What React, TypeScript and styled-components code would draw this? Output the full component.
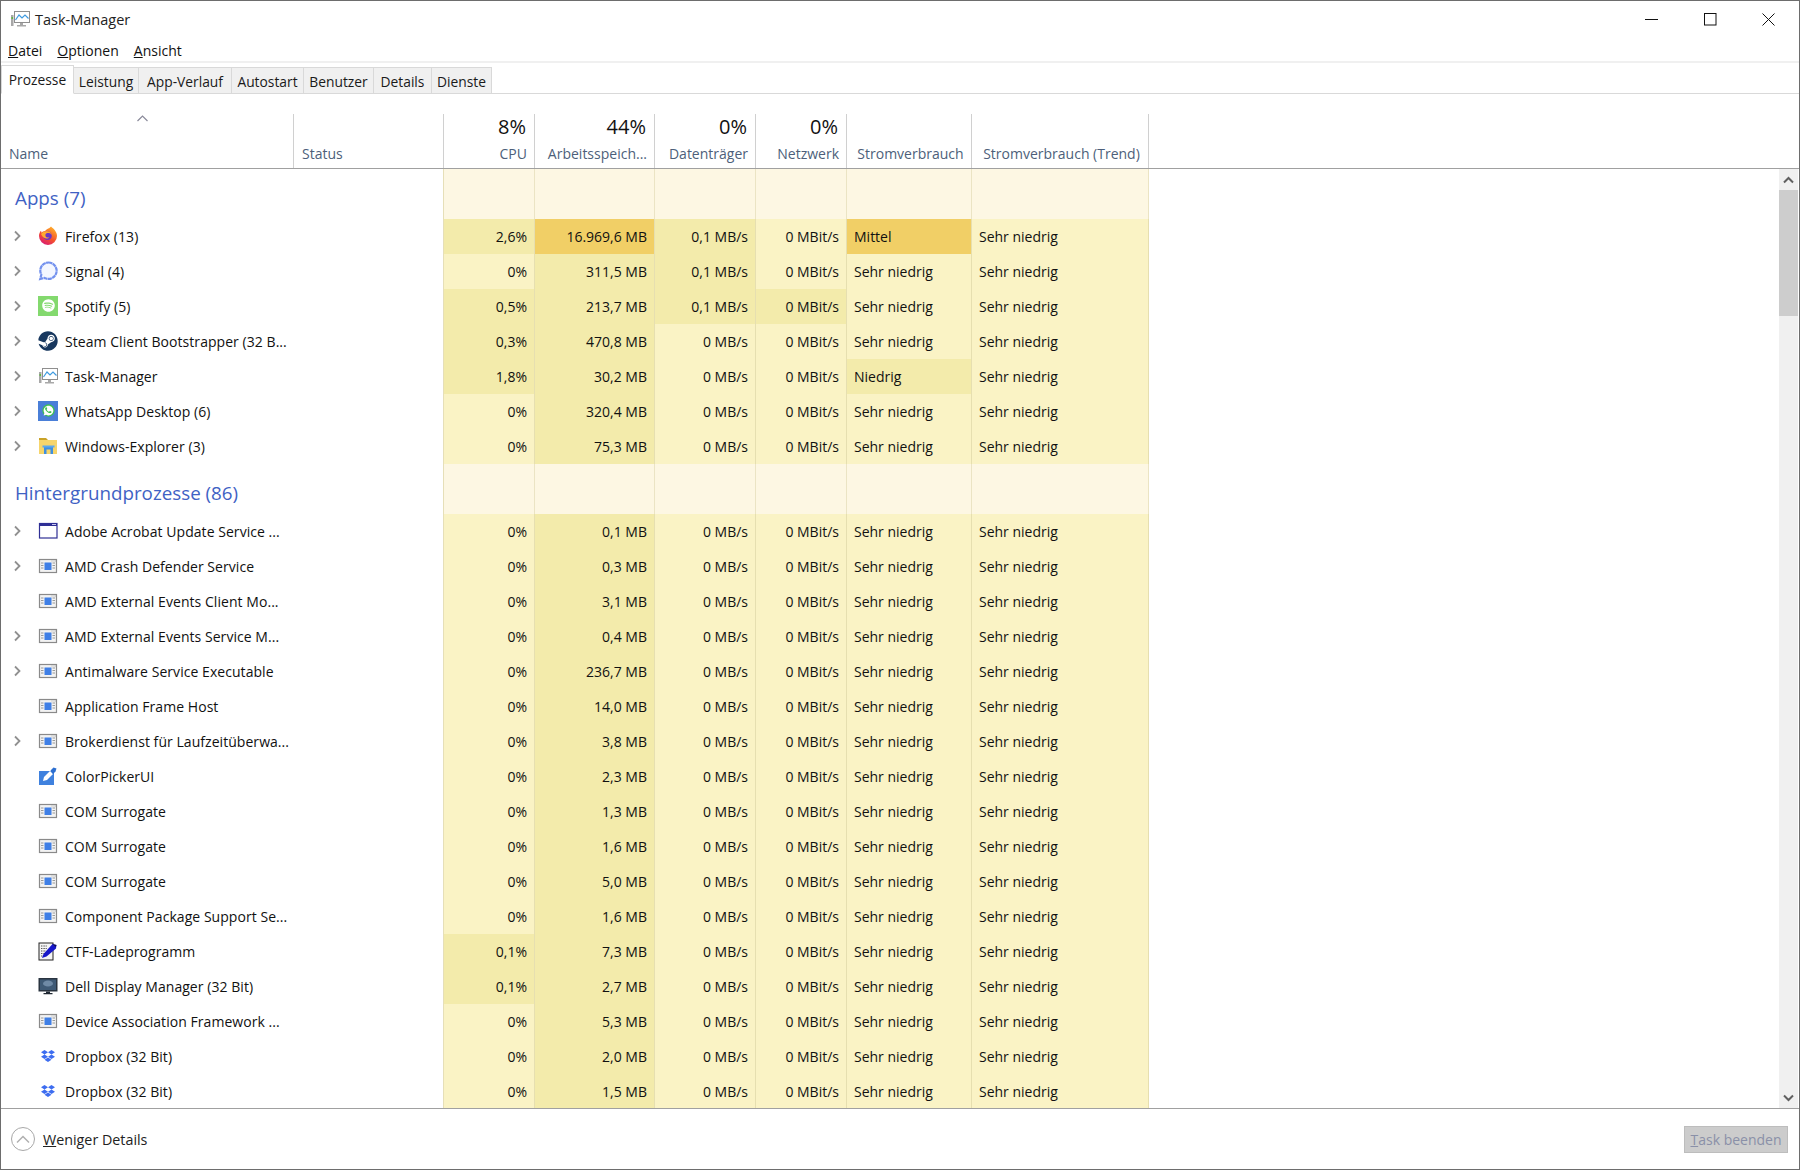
import React from "react";
import styled, { createGlobalStyle } from "styled-components";
import { FaDropbox, FaSteam, FaSpotify } from "react-icons/fa";

const Global = createGlobalStyle`
  html, body { margin: 0; padding: 0; background: #fff; overflow: hidden; }
  * { box-sizing: border-box; }
`;

const COLUMNS = "293px 150px 91px 120px 101px 91px 125px 177px";
const FONT = `"Open Sans", "Noto Sans", "Liberation Sans", sans-serif`;

const Win = styled.div`
  width: 1800px; height: 1170px; display: flex; flex-direction: column;
  border: 1px solid #6d6d6d; background: #fff; color: #000;
  font-family: ${FONT}; font-size: 14px; overflow: hidden;
`;
const TitleBar = styled.div`
  height: 35px; flex: none; display: flex; align-items: center; padding-left: 9px;
`;
const TitleText = styled.span`
  margin-left: 5px; font-size: 14.5px; color: #222; margin-top: 2px; flex: 1;
`;
const WinControls = styled.div`
  display: flex; padding-right: 1px;
`;
const WinBtn = styled.div`
  width: 58.5px; height: 35px; display: flex; align-items: center; justify-content: center;
  margin-top: 1px;
`;
const MenuBar = styled.div`
  height: 27px; flex: none; display: flex; align-items: center; gap: 15px; padding: 3px 0 0 7px;
  border-bottom: 2px solid #f0f0f0;
`;
const MenuItem = styled.span` font-size: 14px; color: #111; `;
const TabBar = styled.div`
  height: 31px; flex: none; display: flex; align-items: flex-end;
  border-bottom: 1px solid #d9d9d9;
`;
const Tab = styled.div<{ $w: number; $active?: boolean }>`
  width: ${p => p.$w}px; height: ${p => (p.$active ? 29 : 26)}px; flex: none;
  display: flex; align-items: center; justify-content: center;
  padding-top: ${p => (p.$active ? 0 : 2)}px;
  background: ${p => (p.$active ? "#fff" : "#f0f0f0")};
  border: 1px solid #d9d9d9; border-left: ${p => (p.$active ? "1px solid #d9d9d9" : "none")};
  border-bottom: ${p => (p.$active ? "1px solid #fff" : "none")};
  margin-bottom: ${p => (p.$active ? "-1px" : "0")};
  font-size: 13.8px; color: #1a1a1a; white-space: nowrap;
  position: relative;
`;
const Header = styled.div`
  height: 75px; flex: none; display: flex; align-items: flex-end;
  border-bottom: 1px solid #a0a0a0;
`;
const HeaderGrid = styled.div`
  display: grid; grid-template-columns: ${COLUMNS}; height: 54px;
`;
const HeadCell = styled.div<{ $align?: string }>`
  position: relative; display: flex; flex-direction: column; justify-content: flex-end;
  align-items: ${p => p.$align === "left" ? "flex-start" : p.$align === "center" ? "center" : "flex-end"};
  border-right: 1px solid #d0d0d0;
  padding: ${p => p.$align === "center" ? "0 6px 2px 9px" : p.$align === "left" ? "0 7px 2px 8px" : "0 7px 2px 7px"};
  overflow: hidden;
`;
const Percent = styled.div`
  font-size: 20px; line-height: 26px; color: #111; margin: 0 1px 1px 0;
`;
const HeadLabel = styled.div` font-size: 14px; line-height: 25px; color: #4d5f7a; white-space: nowrap; `;
const SortCaret = styled.svg`
  position: absolute; left: 136px; top: 1px;
`;
const Body = styled.div`
  flex: 1; min-height: 0; display: flex; border-bottom: 1px solid #a0a0a0;
`;
const List = styled.div` flex: 1; overflow: hidden; min-width: 0; `;
const Row = styled.div`
  display: grid; grid-template-columns: ${COLUMNS}; height: 35px;
`;
const GroupRow = styled(Row)` height: 50px; `;
const GroupTitle = styled.div`
  grid-column: 1 / span 2; padding: 13px 0 0 14px; font-size: 18.8px; line-height: 32px; color: #3f62c4;
  border-right: 1px solid #e6dfb8; white-space: nowrap;
`;
const GroupFill = styled.div` background: #fdf7e3; border-right: 1px solid #ebe4c4; `;
const NameCell = styled.div`
  display: flex; align-items: center; white-space: nowrap; font-size: 14px; letter-spacing: 0.05px; color: #111;
`;
const Chevron = styled.div`
  width: 37px; flex: none; padding-left: 12px; display: flex; align-items: center; margin-top: -2px;
`;
const IconSlot = styled.div`
  width: 20px; height: 20px; flex: none; display: flex; align-items: center; justify-content: center;
  margin-right: 7px; margin-top: -2px;
`;
const StatusCell = styled.div` border-right: 1px solid #e6dfb8; `;
const HEAT: Record<number, string> = { 0: "#faf3c5", 1: "#f3ebab", 2: "#f1cf66" };
const Cell = styled.div<{ $h: number; $left?: boolean }>`
  background: ${p => HEAT[p.$h]}; border-right: 1px solid #e6dfb0;
  display: flex; align-items: center; justify-content: ${p => (p.$left ? "flex-start" : "flex-end")};
  padding: ${p => (p.$left ? "0 7px" : "0 7px 0 0")}; white-space: nowrap; font-size: 14px; color: #111;
`;
const Scrollbar = styled.div`
  width: 19px; flex: none; margin-right: 1px; background: #f0f0f0; display: flex; flex-direction: column;
`;
const ScrollArrow = styled.div`
  height: 21px; flex: none; display: flex; align-items: center; justify-content: center;
`;
const Thumb = styled.div` height: 126px; flex: none; background: #cdcdcd; `;
const Track = styled.div` flex: 1; `;
const Footer = styled.div`
  height: 60px; flex: none; display: flex; align-items: center; padding: 0 11px 0 10px;
`;
const Circle = styled.div`
  width: 24px; height: 24px; border: 1px solid #a8a8a8; border-radius: 50%; flex: none;
  display: flex; align-items: center; justify-content: center;
`;
const FooterLabel = styled.span` margin-left: 8px; font-size: 14.3px; color: #222; flex: 1; `;
const EndTask = styled.div`
  width: 104px; height: 27px; background: #cccccc; border: 1px solid #bdbdbd;
  display: flex; align-items: center; justify-content: center; font-size: 14px; color: #8a90a8;
`;
const SquareIcon = styled.div<{ $bg: string }>`
  width: 20px; height: 20px; background: ${p => p.$bg}; display: flex; align-items: center; justify-content: center;
`;

const Tm = () => (
  <svg width="20" height="20" viewBox="0 0 20 20">
    <rect x="4.500" y="2.500" width="15" height="11" fill="#fff" stroke="#8f8f8f" />
    <path d="M5.500 11 L9 6 L12 9 L15 6 L18.500 9.500" fill="none" stroke="#3f9be0" strokeWidth="1.200" />
    <rect x="1" y="6" width="2.500" height="11" fill="#a8a8a8" />
    <rect x="1.500" y="8" width="1.500" height="2" fill="#5fb83e" />
    <path d="M10 14h3v2h3v1.500H7V16h3z" fill="#a8a8a8" />
  </svg>
);
const Firefox = () => (
  <svg width="20" height="20" viewBox="0 0 20 20">
    <defs>
      <linearGradient id="ff" x1="0.8" y1="0" x2="0.2" y2="1">
        <stop offset="0" stopColor="#ffb52b" />
        <stop offset="0.55" stopColor="#f4512c" />
        <stop offset="1" stopColor="#d7157a" />
      </linearGradient>
    </defs>
    <path d="M13 0.500c1.200 1.500 2.800 2 4 4 1.400 2 2 3.600 2 5.500a9 9 0 1 1-18 0c0-2 .7-4 2-5.300l.6 2c.8-1 2-1.500 3.400-1.600C8.500 3 11 2.800 13 .5z" fill="url(#ff)" />
    <circle cx="9.500" cy="9.800" r="4.300" fill="#6a34c4" />
    <path d="M3 8c2-2.500 5-3 7-2.500 3 .6 4 3.500 3.200 5.500 1-3-1.500-4.500-3.700-4-1.500.3-2.500 1.300-2 3 .5 1.500 2.500 2 4 1.300-1.500 2.200-6.500 2-8.500-3.300z" fill="#ffa930" />
  </svg>
);
const Signal = () => (
  <svg width="20" height="20" viewBox="0 0 20 20">
    <path d="M10.500 1.500a8.200 8.200 0 1 1-4 15.400l-4.300 1.100 1.100-4.300A8.200 8.200 0 0 1 10.500 1.500z" fill="#f4f7ff" stroke="#7391ee" strokeWidth="2.200" strokeDasharray="4 .4" />
  </svg>
);
const Spotify = () => (
  <SquareIcon $bg="#83d96e"><FaSpotify size={13} color="#fff" /></SquareIcon>
);
const WhatsApp = () => (
  <SquareIcon $bg="#4a7fd8">
    <svg width="15" height="15" viewBox="0 0 448 512">
      <circle cx="224" cy="256" r="210" fill="#3fc04f" />
      <path d="M224 90c-92 0-166 74-166 166 0 32 9 62 25 88l-24 84 87-23c25 14 52 20 78 20 92 0 166-74 166-166S316 90 224 90zm96 232c-4 12-24 22-34 23-9 1-20 2-33-2-8-2-18-6-31-11-54-23-89-78-92-82s-22-29-22-55 14-39 19-44 10-6 14-6h10c3 0 8-1 12 9 4 11 15 38 16 40s2 6 0 9c-5 10-11 15-14 19-3 3-6 6-3 12 3 6 14 24 31 39 21 19 39 25 45 27 5 3 8 2 12-1 3-4 14-16 17-22 4-6 7-5 12-3s32 15 37 18c6 3 9 4 10 6 1 3 1 14-3 26z" fill="#fff" />
    </svg>
  </SquareIcon>
);
const Folder = () => (
  <svg width="20" height="20" viewBox="0 0 20 20">
    <path d="M1 2h7l2 2H1z" fill="#c9a227" />
    <rect x="1" y="4" width="18" height="14" fill="#f6d56c" />
    <path d="M6 18v-7h9v7h-2.500v-4.500h-4V18z" fill="#3f8fe0" />
    <rect x="4.500" y="9.500" width="12" height="2" fill="#5aa8ee" />
  </svg>
);
const AdobeWin = () => (
  <svg width="20" height="20" viewBox="0 0 20 20">
    <rect x="1.500" y="2.500" width="17.500" height="14.500" fill="#fff" stroke="#2f2f95" strokeWidth="1.200" />
    <rect x="1.500" y="2.500" width="17.500" height="2.500" fill="#2f2f95" />
    <rect x="14" y="3" width="4" height="1" fill="#c8c8f0" />
  </svg>
);
const AppWin = () => (
  <svg width="20" height="20" viewBox="0 0 20 20">
    <rect x="1.500" y="3.500" width="17" height="13" fill="#f3f3f3" stroke="#8a8a8a" strokeWidth="1.200" />
    <rect x="6.500" y="6.500" width="7" height="7.500" fill="#3f7fe6" />
    <path d="M3 7h2.500M3 9.500h2.500M3 12h2.500M14.500 7H17M14.500 9.500H17M14.500 12H17" stroke="#9a9a9a" strokeWidth="1" />
    <path d="M13.500 5h1M15.500 5h1M17 5h.8" stroke="#aaa" strokeWidth="1" />
  </svg>
);
const Picker = () => (
  <svg width="20" height="20" viewBox="0 0 20 20">
    <rect x="1" y="5" width="15" height="14" fill="#3f81de" />
    <path d="M5 15l1-4 6-6 3 3-6 6z" fill="#fff" />
    <path d="M12.500 4.500l3-3 3 1-1 3-2.500 2.500z" fill="#2d6fd0" />
  </svg>
);
const Ctf = () => (
  <svg width="20" height="20" viewBox="0 0 20 20">
    <rect x="1" y="2" width="14" height="17" fill="#f4f4f4" stroke="#222" />
    <path d="M3 5h6M3 7.500h6M3 10h5M3 12.500h4M3 15h3" stroke="#555" strokeWidth="1" strokeDasharray="1 .6" />
    <path d="M4 17l1.500-4 9-10 4 1-.5 3.500-9.500 8z" fill="#1717c9" />
    <path d="M14.500 3l4 1-1 2z" fill="#101050" />
  </svg>
);
const Monitor = () => (
  <svg width="20" height="20" viewBox="0 0 20 20">
    <rect x="0.500" y="2" width="19" height="13.500" fill="#2a3440" />
    <rect x="2" y="3.500" width="16" height="10.500" fill="#3f5a76" />
    <ellipse cx="10" cy="7.500" rx="5" ry="3" fill="#6f8aa6" />
    <path d="M8 15.500h4v1.500h2.500v1.200h-9V17H8z" fill="#1e2732" />
  </svg>
);

const icons: Record<string, React.ReactNode> = {
  ff: <Firefox />, sig: <Signal />, spo: <Spotify />, st: <FaSteam size={20} color="#17375e" />,
  tm: <Tm />, wa: <WhatsApp />, ex: <Folder />, ad: <AdobeWin />, app: <AppWin />,
  pick: <Picker />, ctf: <Ctf />, mon: <Monitor />, dbx: <FaDropbox size={14} color="#3d6df0" />,
};

const ChevronIcon = () => (
  <svg width="9" height="12" viewBox="0 0 9 12"><path d="M2 1.500 L6.500 6 L2 10.500" fill="none" stroke="#909090" strokeWidth="1.800" /></svg>
);

type R = { i: string; n: string; e?: boolean; c: string; ch?: number; m: string; mh?: number; d: string; dh?: number; nh?: number; p?: string; ph?: number };
const apps: R[] = [
  { i: "ff", n: "Firefox (13)", e: true, c: "2,6%", ch: 1, m: "16.969,6 MB", mh: 2, d: "0,1 MB/s", dh: 1, p: "Mittel", ph: 2 },
  { i: "sig", n: "Signal (4)", e: true, c: "0%", m: "311,5 MB", d: "0,1 MB/s", dh: 1 },
  { i: "spo", n: "Spotify (5)", e: true, c: "0,5%", ch: 1, m: "213,7 MB", d: "0,1 MB/s", dh: 1, nh: 1 },
  { i: "st", n: "Steam Client Bootstrapper (32 B...", e: true, c: "0,3%", ch: 1, m: "470,8 MB", d: "0 MB/s" },
  { i: "tm", n: "Task-Manager", e: true, c: "1,8%", ch: 1, m: "30,2 MB", d: "0 MB/s", p: "Niedrig", ph: 1 },
  { i: "wa", n: "WhatsApp Desktop (6)", e: true, c: "0%", m: "320,4 MB", d: "0 MB/s" },
  { i: "ex", n: "Windows-Explorer (3)", e: true, c: "0%", m: "75,3 MB", d: "0 MB/s" },
];
const bg: R[] = [
  { i: "ad", n: "Adobe Acrobat Update Service ...", e: true, c: "0%", m: "0,1 MB", d: "0 MB/s" },
  { i: "app", n: "AMD Crash Defender Service", e: true, c: "0%", m: "0,3 MB", d: "0 MB/s" },
  { i: "app", n: "AMD External Events Client Mo...", c: "0%", m: "3,1 MB", d: "0 MB/s" },
  { i: "app", n: "AMD External Events Service M...", e: true, c: "0%", m: "0,4 MB", d: "0 MB/s" },
  { i: "app", n: "Antimalware Service Executable", e: true, c: "0%", m: "236,7 MB", d: "0 MB/s" },
  { i: "app", n: "Application Frame Host", c: "0%", m: "14,0 MB", d: "0 MB/s" },
  { i: "app", n: "Brokerdienst für Laufzeitüberwa...", e: true, c: "0%", m: "3,8 MB", d: "0 MB/s" },
  { i: "pick", n: "ColorPickerUI", c: "0%", m: "2,3 MB", d: "0 MB/s" },
  { i: "app", n: "COM Surrogate", c: "0%", m: "1,3 MB", d: "0 MB/s" },
  { i: "app", n: "COM Surrogate", c: "0%", m: "1,6 MB", d: "0 MB/s" },
  { i: "app", n: "COM Surrogate", c: "0%", m: "5,0 MB", d: "0 MB/s" },
  { i: "app", n: "Component Package Support Se...", c: "0%", m: "1,6 MB", d: "0 MB/s" },
  { i: "ctf", n: "CTF-Ladeprogramm", c: "0,1%", ch: 1, m: "7,3 MB", d: "0 MB/s" },
  { i: "mon", n: "Dell Display Manager (32 Bit)", c: "0,1%", ch: 1, m: "2,7 MB", d: "0 MB/s" },
  { i: "app", n: "Device Association Framework ...", c: "0%", m: "5,3 MB", d: "0 MB/s" },
  { i: "dbx", n: "Dropbox (32 Bit)", c: "0%", m: "2,0 MB", d: "0 MB/s" },
  { i: "dbx", n: "Dropbox (32 Bit)", c: "0%", m: "1,5 MB", d: "0 MB/s" },
];

const tabs: [string, number][] = [["Leistung", 65], ["App-Verlauf", 93], ["Autostart", 72], ["Benutzer", 70], ["Details", 58], ["Dienste", 60]];
const heads: [string, string | null, string?][] = [
  ["CPU", "8%"], ["Arbeitsspeich...", "44%"], ["Datenträger", "0%"], ["Netzwerk", "0%"],
  ["Stromverbrauch", null, "center"], ["Stromverbrauch (Trend)", null, "center"],
];

const Group = ({ title }: { title: string }) => (
  <GroupRow>
    <GroupTitle>{title}</GroupTitle>
    {[0, 1, 2, 3, 4, 5].map(i => <GroupFill key={i} />)}
  </GroupRow>
);
const ProcRow = ({ r }: { r: R }) => (
  <Row>
    <NameCell>
      <Chevron>{r.e && <ChevronIcon />}</Chevron>
      <IconSlot>{icons[r.i]}</IconSlot>
      {r.n}
    </NameCell>
    <StatusCell />
    <Cell $h={r.ch ?? 0}>{r.c}</Cell>
    <Cell $h={r.mh ?? 1}>{r.m}</Cell>
    <Cell $h={r.dh ?? 0}>{r.d}</Cell>
    <Cell $h={r.nh ?? 0}>0 MBit/s</Cell>
    <Cell $h={r.ph ?? 0} $left>{r.p ?? "Sehr niedrig"}</Cell>
    <Cell $h={0} $left>Sehr niedrig</Cell>
  </Row>
);

export default function App() {
  return (
    <>
      <Global />
      <Win>
        <TitleBar>
          <Tm />
          <TitleText>Task-Manager</TitleText>
          <WinControls>
            <WinBtn><svg width="13" height="13" viewBox="0 0 13 13"><path d="M0 6.500h13" stroke="#111" strokeWidth="1" /></svg></WinBtn>
            <WinBtn><svg width="13" height="13" viewBox="0 0 13 13"><rect x=".5" y=".5" width="11.500" height="11.500" fill="none" stroke="#111" strokeWidth="1" /></svg></WinBtn>
            <WinBtn><svg width="13" height="13" viewBox="0 0 13 13"><path d="M.5 .5l12 12M12.500 .5l-12 12" stroke="#111" strokeWidth="1" /></svg></WinBtn>
          </WinControls>
        </TitleBar>
        <MenuBar>
          <MenuItem><u>D</u>atei</MenuItem>
          <MenuItem><u>O</u>ptionen</MenuItem>
          <MenuItem><u>A</u>nsicht</MenuItem>
        </MenuBar>
        <TabBar>
          <Tab $w={73} $active>Prozesse</Tab>
          {tabs.map(([t, w]) => <Tab key={t} $w={w}>{t}</Tab>)}
        </TabBar>
        <Header>
          <HeaderGrid>
            <HeadCell $align="left">
              <SortCaret width="11" height="7" viewBox="0 0 11 7"><path d="M.5 6 L5.500 1 L10.500 6" fill="none" stroke="#8a8a9a" strokeWidth="1.200" /></SortCaret>
              <HeadLabel>Name</HeadLabel>
            </HeadCell>
            <HeadCell $align="left"><HeadLabel>Status</HeadLabel></HeadCell>
            {heads.map(([l, pct, a]) => (
              <HeadCell key={l} $align={a}>
                {pct && <Percent>{pct}</Percent>}
                <HeadLabel>{l}</HeadLabel>
              </HeadCell>
            ))}
          </HeaderGrid>
        </Header>
        <Body>
          <List>
            <Group title="Apps (7)" />
            {apps.map((r, i) => <ProcRow key={i} r={r} />)}
            <Group title="Hintergrundprozesse (86)" />
            {bg.map((r, i) => <ProcRow key={i} r={r} />)}
          </List>
          <Scrollbar>
            <ScrollArrow><svg width="11" height="8" viewBox="0 0 11 8"><path d="M1 6.500 L5.500 2 L10 6.500" fill="none" stroke="#606060" strokeWidth="2" /></svg></ScrollArrow>
            <Thumb />
            <Track />
            <ScrollArrow><svg width="11" height="8" viewBox="0 0 11 8"><path d="M1 1.500 L5.500 6 L10 1.500" fill="none" stroke="#606060" strokeWidth="2" /></svg></ScrollArrow>
          </Scrollbar>
        </Body>
        <Footer>
          <Circle><svg width="14" height="9" viewBox="0 0 14 9"><path d="M1 7.500 L7 1.500 L13 7.500" fill="none" stroke="#b0b0b0" strokeWidth="1.500" /></svg></Circle>
          <FooterLabel><u>W</u>eniger Details</FooterLabel>
          <EndTask><span><u>T</u>ask beenden</span></EndTask>
        </Footer>
      </Win>
    </>
  );
}
